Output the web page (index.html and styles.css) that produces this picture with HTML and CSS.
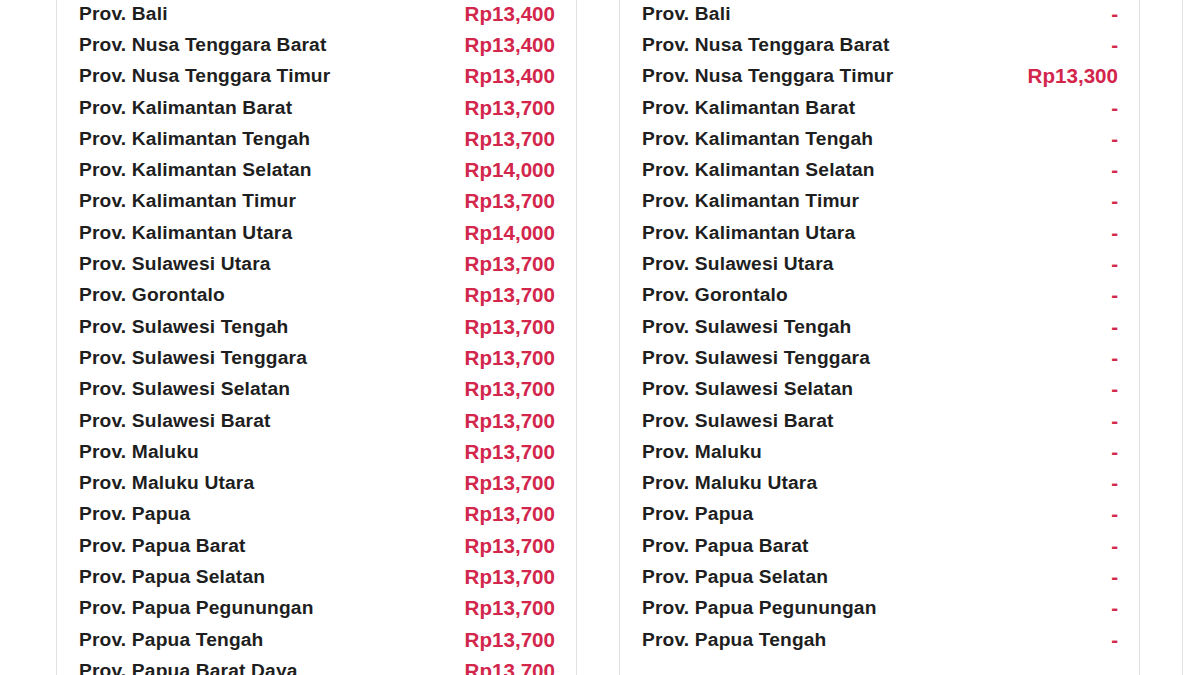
FILE: index.html
```html
<!DOCTYPE html>
<html>
<head>
<meta charset="utf-8">
<link rel="stylesheet" href="styles.css">
</head>
<body>
<div class="wrap">
  <div class="card">
    <div class="row"><span class="name">Prov. Bali</span><span class="val">Rp13,400</span></div>
    <div class="row"><span class="name">Prov. Nusa Tenggara Barat</span><span class="val">Rp13,400</span></div>
    <div class="row"><span class="name">Prov. Nusa Tenggara Timur</span><span class="val">Rp13,400</span></div>
    <div class="row"><span class="name">Prov. Kalimantan Barat</span><span class="val">Rp13,700</span></div>
    <div class="row"><span class="name">Prov. Kalimantan Tengah</span><span class="val">Rp13,700</span></div>
    <div class="row"><span class="name">Prov. Kalimantan Selatan</span><span class="val">Rp14,000</span></div>
    <div class="row"><span class="name">Prov. Kalimantan Timur</span><span class="val">Rp13,700</span></div>
    <div class="row"><span class="name">Prov. Kalimantan Utara</span><span class="val">Rp14,000</span></div>
    <div class="row"><span class="name">Prov. Sulawesi Utara</span><span class="val">Rp13,700</span></div>
    <div class="row"><span class="name">Prov. Gorontalo</span><span class="val">Rp13,700</span></div>
    <div class="row"><span class="name">Prov. Sulawesi Tengah</span><span class="val">Rp13,700</span></div>
    <div class="row"><span class="name">Prov. Sulawesi Tenggara</span><span class="val">Rp13,700</span></div>
    <div class="row"><span class="name">Prov. Sulawesi Selatan</span><span class="val">Rp13,700</span></div>
    <div class="row"><span class="name">Prov. Sulawesi Barat</span><span class="val">Rp13,700</span></div>
    <div class="row"><span class="name">Prov. Maluku</span><span class="val">Rp13,700</span></div>
    <div class="row"><span class="name">Prov. Maluku Utara</span><span class="val">Rp13,700</span></div>
    <div class="row"><span class="name">Prov. Papua</span><span class="val">Rp13,700</span></div>
    <div class="row"><span class="name">Prov. Papua Barat</span><span class="val">Rp13,700</span></div>
    <div class="row"><span class="name">Prov. Papua Selatan</span><span class="val">Rp13,700</span></div>
    <div class="row"><span class="name">Prov. Papua Pegunungan</span><span class="val">Rp13,700</span></div>
    <div class="row"><span class="name">Prov. Papua Tengah</span><span class="val">Rp13,700</span></div>
    <div class="row"><span class="name">Prov. Papua Barat Daya</span><span class="val">Rp13,700</span></div>
  </div>
  <div class="card">
    <div class="row"><span class="name">Prov. Bali</span><span class="val">-</span></div>
    <div class="row"><span class="name">Prov. Nusa Tenggara Barat</span><span class="val">-</span></div>
    <div class="row"><span class="name">Prov. Nusa Tenggara Timur</span><span class="val">Rp13,300</span></div>
    <div class="row"><span class="name">Prov. Kalimantan Barat</span><span class="val">-</span></div>
    <div class="row"><span class="name">Prov. Kalimantan Tengah</span><span class="val">-</span></div>
    <div class="row"><span class="name">Prov. Kalimantan Selatan</span><span class="val">-</span></div>
    <div class="row"><span class="name">Prov. Kalimantan Timur</span><span class="val">-</span></div>
    <div class="row"><span class="name">Prov. Kalimantan Utara</span><span class="val">-</span></div>
    <div class="row"><span class="name">Prov. Sulawesi Utara</span><span class="val">-</span></div>
    <div class="row"><span class="name">Prov. Gorontalo</span><span class="val">-</span></div>
    <div class="row"><span class="name">Prov. Sulawesi Tengah</span><span class="val">-</span></div>
    <div class="row"><span class="name">Prov. Sulawesi Tenggara</span><span class="val">-</span></div>
    <div class="row"><span class="name">Prov. Sulawesi Selatan</span><span class="val">-</span></div>
    <div class="row"><span class="name">Prov. Sulawesi Barat</span><span class="val">-</span></div>
    <div class="row"><span class="name">Prov. Maluku</span><span class="val">-</span></div>
    <div class="row"><span class="name">Prov. Maluku Utara</span><span class="val">-</span></div>
    <div class="row"><span class="name">Prov. Papua</span><span class="val">-</span></div>
    <div class="row"><span class="name">Prov. Papua Barat</span><span class="val">-</span></div>
    <div class="row"><span class="name">Prov. Papua Selatan</span><span class="val">-</span></div>
    <div class="row"><span class="name">Prov. Papua Pegunungan</span><span class="val">-</span></div>
    <div class="row"><span class="name">Prov. Papua Tengah</span><span class="val">-</span></div>
  </div>
  <div class="card card-next"></div>
</div>
</body>
</html>
```
FILE: styles.css
```css
html, body {
  margin: 0;
  padding: 0;
  background: #ffffff;
  overflow: hidden;
}
body {
  width: 1200px;
  height: 675px;
  font-family: "Liberation Sans", Arial, Helvetica, sans-serif;
}
.wrap {
  display: flex;
  align-items: flex-start;
  gap: 42px;
  padding-left: 56px;
  margin-top: -2px;
}
.card {
  flex: 0 0 521px;
  box-sizing: border-box;
  border-left: 1px solid #e2e2e2;
  border-right: 1px solid #e2e2e2;
  padding: 0 21px 0 22px;
  min-height: 700px;
}
.card-next {
  flex: 0 0 18px;
  padding: 0;
  border-right: none;
}
.row {
  display: flex;
  justify-content: space-between;
  align-items: center;
  height: 31.3px;
}
.name {
  font-size: 19.2px;
  font-weight: bold;
  color: #1e1e1e;
  letter-spacing: 0.16px;
}
.val {
  font-size: 20.6px;
  font-weight: bold;
  color: #d3264c;
}
```
